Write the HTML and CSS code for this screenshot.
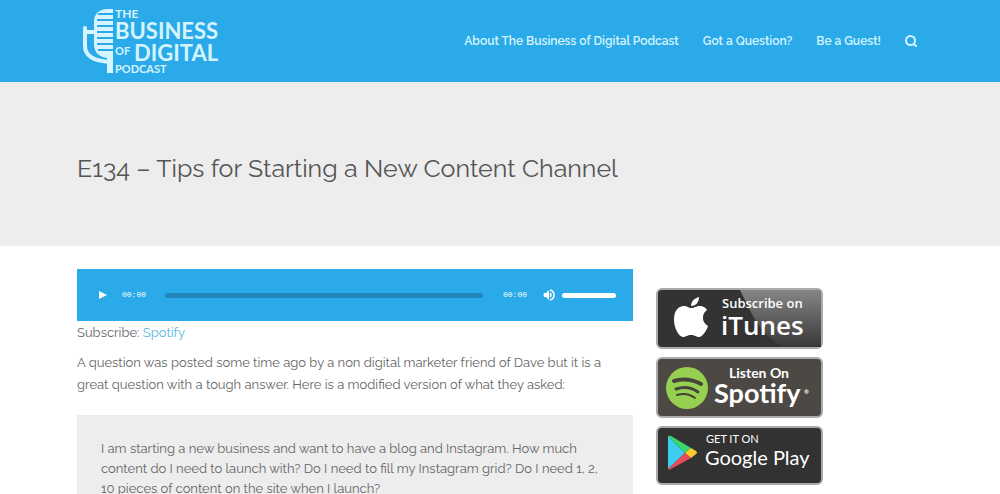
FILE: index.html
```
<!DOCTYPE html>
<html lang="en">
<head>
  <meta charset="UTF-8">
  <meta name="viewport" content="width=device-width, initial-scale=1">
  <title>E134 – Tips for Starting a New Content Channel</title>
  <link rel="stylesheet" href="styles.css">
</head>
<body>

  <!-- Header -->
  <header class="site-header">
    <div class="container header-inner">
      <a class="logo" href="#" aria-label="The Business of Digital Podcast">
        <svg width="146" height="70" viewBox="0 0 146 70">
          <!-- Microphone -->
          <path d="M36 5v64h-6V54c-8-1-13-6-13-14V18C17 9 23 5 31 5z" fill="currentColor"/>
          <path class="logo-lines" d="M21 10h16M20 16h17M20 22h17M20 28h17M20 34h17M20 40h17M21 46h16"/>
          <path d="M8 24v18c0 10 8 15 25 16M8 28h10" fill="none" stroke="currentColor" stroke-width="4" stroke-linecap="round"/>
          <g class="logo-text">
            <text x="38" y="14" font-size="12">THE</text>
            <text x="38" y="35" font-size="22">BUSINESS</text>
            <text x="38" y="51" font-size="11">OF</text>
            <text x="57" y="57" font-size="22">DIGITAL</text>
            <text x="38" y="69" font-size="11">PODCAST</text>
          </g>
        </svg>
      </a>
      <nav class="main-nav">
        <a href="#">About The Business of Digital Podcast</a>
        <a href="#">Got a Question?</a>
        <a href="#">Be a Guest!</a>
        <button class="search-btn" type="button" aria-label="Search">
          <svg width="12" height="12" viewBox="0 0 12 12" fill="none" stroke="currentColor" stroke-width="2">
            <circle cx="5.500" cy="5.500" r="4.500"/>
            <path d="M9 9l2 2" stroke-linecap="round"/>
          </svg>
        </button>
      </nav>
    </div>
  </header>

  <!-- Title -->
  <section class="page-title">
    <div class="container">
      <h1>E134 – Tips for Starting a New Content Channel</h1>
    </div>
  </section>

  <div class="container content">
    <main>
      <div class="player">
        <button class="play-btn" type="button" aria-label="Play">
          <svg width="8" height="8" viewBox="0 0 8 8"><path d="M0 0l8 4-8 4z" fill="currentColor"/></svg>
        </button>
        <span class="time">00:00</span>
        <input class="seek" type="range" min="0" max="100" value="0" aria-label="Seek">
        <span class="time duration">00:00</span>
        <button class="mute-btn" type="button" aria-label="Mute">
          <svg width="12" height="12" viewBox="0 0 12 12">
            <path d="M1 4h2l3-3v10L3 8H1q-1-2 0-4z" fill="currentColor"/>
            <path d="M7 4q2 2 0 4M7 1q4 1 4 5t-4 5" fill="none" stroke="currentColor" stroke-width="1.500"/>
          </svg>
        </button>
        <input class="volume" type="range" min="0" max="100" value="100" aria-label="Volume">
      </div>

      <p class="subscribe">Subscribe: <a href="#">Spotify</a></p>
      <p>A question was posted some time ago by a non digital marketer friend of Dave but it is a great question with a tough answer. Here is a modified version of what they asked:</p>

      <blockquote>I am starting a new business and want to have a blog and Instagram. How much content do I need to launch with? Do I need to fill my Instagram grid? Do I need 1, 2, 10 pieces of content on the site when I launch?</blockquote>
    </main>

    <!-- Store badges -->
    <aside class="badges">
      <a href="#" aria-label="Subscribe on iTunes">
        <svg width="167" height="61" viewBox="0 0 167 61">
          <defs>
            <linearGradient id="shine" x1="0" y1="0" x2="0" y2="1">
              <stop offset="0" stop-color="#858585"/>
              <stop offset="1" stop-color="#383838"/>
            </linearGradient>
          </defs>
          <rect x="1" y="1" width="165" height="59" rx="5" fill="#333" stroke="#aaa" stroke-width="2"/>
          <path d="M84 2h77a4 4 0 0 1 4 4v53h-37C106 49 98 31 84 2z" fill="url(#shine)"/>
          <path d="M35 20c4 0 5-2 9-2 3 0 5 1 7 4-6 4-5 13 1 16-2 6-6 11-9 11s-4-2-8-2-5 2-8 2c-4 0-9-9-9-17 0-9 4-14 10-14 3 0 5 2 7 2z" fill="#fff"/>
          <path d="M35 18c0-5 4-8 8-9 0 5-3 9-8 9z" fill="#fff"/>
          <g class="itunes-text">
            <text x="66" y="20" font-size="13">Subscribe on</text>
            <text x="65" y="47" font-size="26">iTunes</text>
          </g>
        </svg>
      </a>
      <a href="#" aria-label="Listen on Spotify">
        <svg width="167" height="61" viewBox="0 0 167 61">
          <rect x="1" y="1" width="165" height="59" rx="5" fill="#4c4844" stroke="#aaa" stroke-width="2"/>
          <circle cx="31" cy="31" r="21" fill="#96d050"/>
          <g fill="none" stroke="#45443a" stroke-linecap="round">
            <path d="M18 24q14-4 27 3" stroke-width="4"/>
            <path d="M20 32q12-4 22 3" stroke-width="3"/>
            <path d="M21 38q10-3 18 3" stroke-width="2"/>
          </g>
          <g class="spotify-text">
            <text x="73" y="21" font-size="14">Listen On</text>
            <text x="58" y="46" font-size="27">Spotify</text>
            <text x="148" y="37" font-size="6">®</text>
          </g>
        </svg>
      </a>
      <a href="#" aria-label="Get it on Google Play">
        <svg width="167" height="59" viewBox="0 0 167 59">
          <rect x="1" y="1" width="165" height="57" rx="5" fill="#323232" stroke="#aaa" stroke-width="2"/>
          <path d="M12 10v33l17-16z" fill="#3dcdf0"/>
          <path d="M12 10q1-1 3 0l20 12-6 5z" fill="#3cd66f"/>
          <path d="M35 22l5 3q2 2 0 3l-5 4-6-5z" fill="#fcca2e"/>
          <path d="M12 43l17-16 6 5-20 11q-2 1-3 0z" fill="#e94b5b"/>
          <g class="play-text">
            <text x="50" y="17" font-size="11">GET IT ON</text>
            <text x="49" y="39" font-size="20">Google Play</text>
          </g>
        </svg>
      </a>
    </aside>
  </div>

</body>
</html>
```

FILE: styles.css
```
* {
  box-sizing: border-box;
}

body {
  margin: 0;
  background: #fff;
  color: #666;
  font-family: Raleway, Lato, sans-serif;
  font-size: 13px;
  line-height: 22px;
}

a {
  color: #55b8e4;
  text-decoration: none;
}

button {
  display: flex;
  padding: 0;
  border: none;
  background: none;
  color: inherit;
  cursor: pointer;
}

.container {
  padding: 0 77px;
}

.site-header {
  background: #2aaae8;
  color: #d5f4ff;
}

.header-inner {
  display: flex;
  align-items: center;
  justify-content: space-between;
  height: 82px;
}

.logo {
  display: flex;
  color: inherit;
  margin-top: -4px;
}

.logo-lines {
  stroke: #2aaae8;
  stroke-width: 2;
}

.logo-text {
  fill: currentColor;
  font-family: Lato, sans-serif;
  font-weight: 700;
}

.main-nav {
  display: flex;
  align-items: center;
  gap: 24px;
  padding-right: 6px;
  font-size: 12px;
  font-weight: 600;
}

.main-nav a {
  color: inherit;
}

.page-title {
  padding: 68px 0 60px;
  background: #ededed;
}

h1 {
  margin: 0;
  color: #555;
  font-size: 25px;
  font-weight: 400;
  line-height: 36px;
}

.content {
  display: grid;
  grid-template-columns: 1fr 267px;
  gap: 23px;
  padding-top: 23px;
}

.player {
  display: flex;
  align-items: center;
  height: 52px;
  padding: 0 17px 0 22px;
  background: #2aaae8;
  color: #fff;
}

.time {
  margin: 0 19px 0 15px;
  font-family: "Liberation Mono", monospace;
  font-size: 8px;
}

.duration {
  margin: 0 16px 0 20px;
}

.mute-btn {
  margin-right: 7px;
}

.seek,
.volume {
  appearance: none;
  height: 5px;
  margin: 0;
  border-radius: 3px;
}

.seek {
  flex: 1;
  min-width: 0;
  background: #2287ba;
}

.volume {
  width: 54px;
  background: #fff;
}

.seek::-webkit-slider-thumb,
.volume::-webkit-slider-thumb {
  appearance: none;
  width: 0;
  height: 0;
}

p {
  margin: 0 0 8px;
}

.subscribe {
  padding-top: 1px;
}

blockquote {
  margin: 19px 0 0;
  padding: 24px 32px 24px 24px;
  background: #ededed;
  line-height: 20px;
}

.badges {
  display: flex;
  flex-direction: column;
  align-items: flex-start;
  gap: 8px;
  padding-top: 19px;
}

.badges a {
  display: flex;
}

.badges text {
  fill: #fff;
}

.itunes-text {
  font-family: "Open Sans", sans-serif;
  font-weight: 600;
}

.spotify-text {
  font-family: Lato, sans-serif;
  font-weight: 700;
}

.play-text {
  font-family: Lato, sans-serif;
}
```
